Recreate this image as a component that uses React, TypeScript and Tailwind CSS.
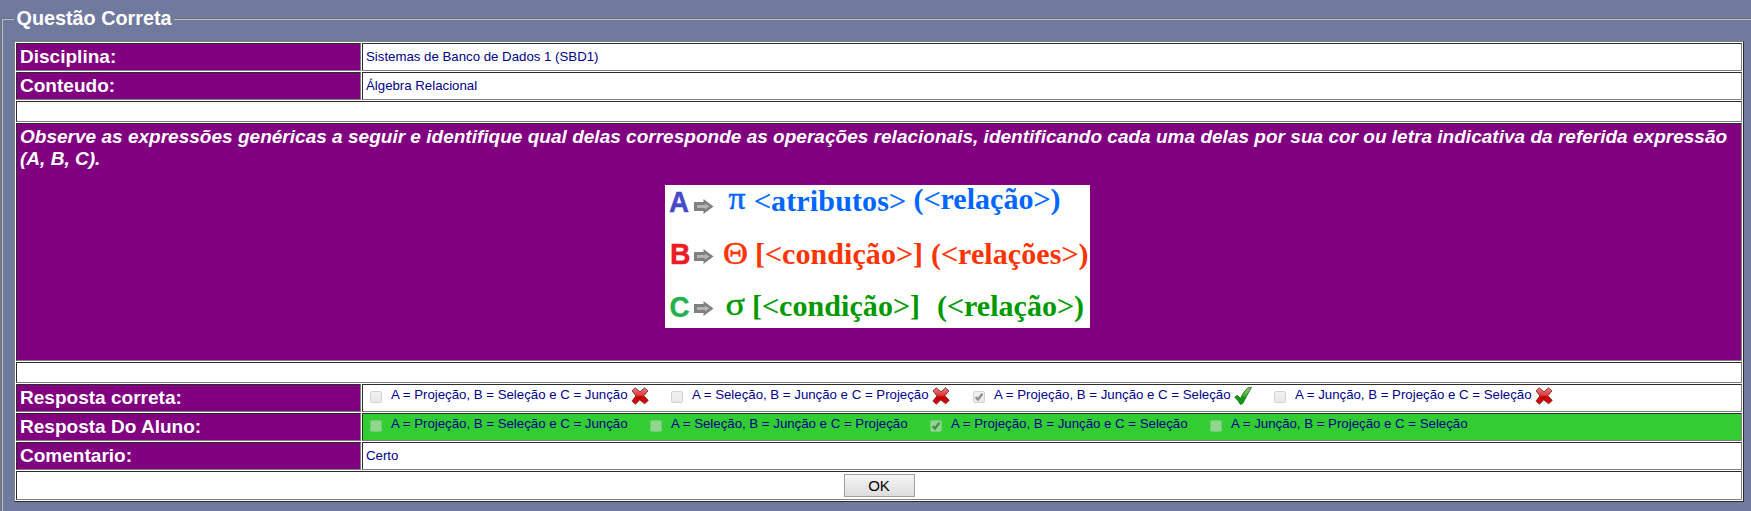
import React from "react";

type Mark = "wrong" | "right" | null;

const cell = "border border-t-[#2c2c2c] border-l-[#2c2c2c] border-b-[#808080] border-r-[#808080]";

function Cross() {
  return (
    <svg width="18" height="18" viewBox="0 0 18 18" className="shrink-0">
      <defs>
        <linearGradient id="red" x1="0" y1="0" x2="0" y2="1">
          <stop offset="0" stopColor="#f08080" />
          <stop offset="0.45" stopColor="#dc3a3a" />
          <stop offset="0.55" stopColor="#c80000" />
          <stop offset="1" stopColor="#d80808" />
        </linearGradient>
      </defs>
      <path
        d="M1 3.8 L4.2 .8 L9 4.8 L13.6 .8 L17 3.9 L12.9 8.7 L17.3 13.4 L13.6 16.8 L8.8 12.9 L4.2 17.3 L.9 14 L4.9 9 Z"
        fill="url(#red)"
        stroke="#7c3030"
        strokeWidth="0.9"
        strokeLinejoin="round"
      />
    </svg>
  );
}

function Tick() {
  return (
    <svg width="18" height="18" viewBox="0 0 18 18" className="shrink-0">
      <defs>
        <linearGradient id="green" x1="0" y1="0" x2="0" y2="1">
          <stop offset="0" stopColor="#8fd67c" />
          <stop offset="0.5" stopColor="#35b02a" />
          <stop offset="0.6" stopColor="#089a08" />
          <stop offset="1" stopColor="#07a307" />
        </linearGradient>
      </defs>
      <path
        d="M.9 10.2 Q1.8 8.2 4 8.8 L6.4 11.6 Q9.4 4.4 13.8 .9 L17.4 .6 Q12.8 8.2 8.8 16.4 L6.4 17.4 Q4.2 13.4 .9 10.2 Z"
        fill="url(#green)"
        stroke="#2c6a28"
        strokeWidth="0.9"
        strokeLinejoin="round"
      />
    </svg>
  );
}

function Box({ checked, tinted }: { checked?: boolean; tinted?: boolean }) {
  return (
    <span
      className={
        "flex size-3 shrink-0 rounded-[2px] border " +
        (tinted
          ? "border-[#7fc47f] bg-[#8cd88c]"
          : "border-[#d2d2d2] bg-linear-to-b from-[#f1f1f1] to-[#e9e9e9]")
      }
    >
      {checked && (
        <svg width="10" height="10" viewBox="0 0 10 10">
          <path d="M1.6 5.2 L4 7.5 L8.4 1.8" fill="none" stroke={tinted ? "#4b8a4b" : "#8f8f8f"} strokeWidth="2.3" />
        </svg>
      )}
    </span>
  );
}

function Option({ text, checked, mark, tinted, width }: { text: string; checked?: boolean; mark?: Mark; tinted?: boolean; width: string }) {
  return (
    <div className={"flex shrink-0 items-start " + width}>
      <div className="pt-[6px]">
        <Box checked={checked} tinted={tinted} />
      </div>
      <span className="ml-[9px] mt-[2px] whitespace-nowrap leading-[15px]">{text}</span>
      {mark && <div className="ml-[3.5px] pt-[2px]">{mark === "wrong" ? <Cross /> : <Tick />}</div>}
    </div>
  );
}

function Row({ label, children, className = "bg-white" }: { label: string; children: React.ReactNode; className?: string }) {
  return (
    <div className="flex h-7 gap-px">
      <div className={"w-[345px] shrink-0 bg-[#800080] px-[3px] pt-[2px] text-[19.04px] font-bold leading-[22px] text-white " + cell}>
        {label}
      </div>
      <div className={"flex flex-1 text-[13.24px] text-[#00008b] " + cell + " " + className}>{children}</div>
    </div>
  );
}

function Arrow({ x, y }: { x: number; y: number }) {
  return (
    <g transform={`translate(${x} ${y})`}>
      <path d="M0 3 H9.5 V0 L19.5 7.5 L9.5 15 V12 H0 Z" fill="#808080" />
      <path d="M3 6 H11 V4.5 L15.5 7.5 L11 10.5 V9 H3 Z" fill="#b4b4b4" />
    </g>
  );
}

function Formula({ x, y, open, word, close, length, color }: { x: number; y: number; open: string; word: string; close: string; length: number; color: string }) {
  return (
    <text x={x} y={y} textLength={length} fontSize="30" fontWeight="bold" fill={color}>
      {open}
      <tspan fontWeight="normal" stroke={color} strokeWidth="0.4">&lt;</tspan>
      {word}
      <tspan fontWeight="normal" stroke={color} strokeWidth="0.4">&gt;</tspan>
      {close}
    </text>
  );
}

function Expressions() {
  return (
    <svg width="425" height="143" viewBox="0 0 425 143" className="block overflow-visible bg-white" fontFamily="'Liberation Serif', serif">
      <g fontFamily="'Liberation Sans', sans-serif" fontWeight="bold" fontSize="29" strokeWidth="0.4">
        <text x="4" y="26.5" textLength="20" lengthAdjust="spacingAndGlyphs" fill="#4848c8" stroke="#4848c8">A</text>
        <text x="5" y="78.5" textLength="20.5" lengthAdjust="spacingAndGlyphs" fill="#ed1c24" stroke="#ed1c24">B</text>
        <text x="4.5" y="132" textLength="20" lengthAdjust="spacingAndGlyphs" fill="#22b14c" stroke="#22b14c">C</text>
      </g>
      <Arrow x={29} y={14} />
      <Arrow x={29} y={64} />
      <Arrow x={29} y={116} />
      <g fontWeight="normal" fontSize="31" strokeWidth="0.5">
        <text x="63.5" y="23.5" textLength="17" lengthAdjust="spacingAndGlyphs" fill="#0066ff" stroke="#0066ff">π</text>
        <text x="58" y="79" textLength="25" lengthAdjust="spacingAndGlyphs" fill="#ff3300" stroke="#ff3300">Θ</text>
        <text x="60.5" y="130" textLength="19.5" lengthAdjust="spacingAndGlyphs" fill="#009900" stroke="#009900">σ</text>
      </g>
      <Formula x={89} y={25.5} open="" word="atributos" close="" length={152} color="#0066ff" />
      <Formula x={248.5} y={24} open="(" word="relação" close=")" length={147} color="#0066ff" />
      <Formula x={90} y={79} open="[" word="condição" close="]" length={168} color="#ff3300" />
      <Formula x={266} y={79} open="(" word="relações" close=")" length={157.5} color="#ff3300" />
      <Formula x={87} y={130.5} open="[" word="condição" close="]" length={168} color="#009900" />
      <Formula x={272} y={130.5} open="(" word="relação" close=")" length={147} color="#009900" />
    </svg>
  );
}

export default function App() {
  return (
    <div className="h-[511px] w-full overflow-hidden bg-[#70799e] pl-px font-['Liberation_Sans',Arial,sans-serif]">
      <div className="flex h-[30px] items-start">
        <div className="mt-[18px] h-3 w-[13px] shrink-0 border-l border-t border-[#6f6f6f]">
          <div className="h-full w-full border-l border-t border-[#c0c0c0]" />
        </div>
        <h1 className="w-[160px] shrink-0 whitespace-nowrap px-[2.5px] pt-[7px] text-[19.8px] font-bold leading-[22px] text-white">
          Questão Correta
        </h1>
        <div className="mt-[18px] h-[2px] flex-1 border-b border-t border-b-[#c0c0c0] border-t-[#6f6f6f]" />
      </div>
      <div className="h-[481px] border-l border-[#6f6f6f]">
        <div className="h-full border-l border-[#c0c0c0] pl-[11px] pt-[11px]">
          <div className="flex w-[1730px] flex-col gap-px border border-b-[#2c2c2c] border-l-[#808080] border-r-[#2c2c2c] border-t-[#808080] bg-white p-px">
            <Row label="Disciplina:">
              <span className="pl-[3px] pt-[5px] leading-[15px]">Sistemas de Banco de Dados 1 (SBD1)</span>
            </Row>
            <Row label="Conteudo:">
              <span className="pl-[3px] pt-[5px] leading-[15px]">Álgebra Relacional</span>
            </Row>
            <div className={"h-[21px] bg-white " + cell} />
            <div className={"h-[238px] bg-[#800080] px-[3px] pt-[2px] text-[19.04px] font-bold italic leading-[22px] text-white " + cell}>
              <p>
                Observe as expressões genéricas a seguir e identifique qual delas corresponde as operações relacionais,
                identificando cada uma delas por sua cor ou letra indicativa da referida expressão (A, B, C).
              </p>
              <div className="flex justify-center pr-[3px] pt-[15px] not-italic">
                <Expressions />
              </div>
            </div>
            <div className={"h-[21px] bg-white " + cell} />
            <Row label="Resposta correta:">
              <div className="flex pl-[7px]">
                <Option width="w-[301px]" text="A = Projeção, B = Seleção e C = Junção" mark="wrong" />
                <Option width="w-[302px]" text="A = Seleção, B = Junção e C = Projeção" mark="wrong" />
                <Option width="w-[301px]" text="A = Projeção, B = Junção e C = Seleção" checked mark="right" />
                <Option width="w-[301px]" text="A = Junção, B = Projeção e C = Seleção" mark="wrong" />
              </div>
            </Row>
            <Row label="Resposta Do Aluno:" className="bg-[#32cd32]">
              <div className="flex pl-[7px]">
                <Option width="w-[280px]" text="A = Projeção, B = Seleção e C = Junção" tinted />
                <Option width="w-[280px]" text="A = Seleção, B = Junção e C = Projeção" tinted />
                <Option width="w-[280px]" text="A = Projeção, B = Junção e C = Seleção" checked tinted />
                <Option width="w-[280px]" text="A = Junção, B = Projeção e C = Seleção" tinted />
              </div>
            </Row>
            <Row label="Comentario:">
              <span className="pl-[3px] pt-[5px] leading-[15px]">Certo</span>
            </Row>
            <div className={"flex h-[29px] justify-center bg-white pt-[2px] " + cell}>
              <button className="h-[23px] w-[71px] border border-[#a0a0a0] bg-linear-to-b from-[#f6f6f6] to-[#dddddd] text-[15px] leading-[21px] text-black">
                OK
              </button>
            </div>
          </div>
        </div>
      </div>
    </div>
  );
}
